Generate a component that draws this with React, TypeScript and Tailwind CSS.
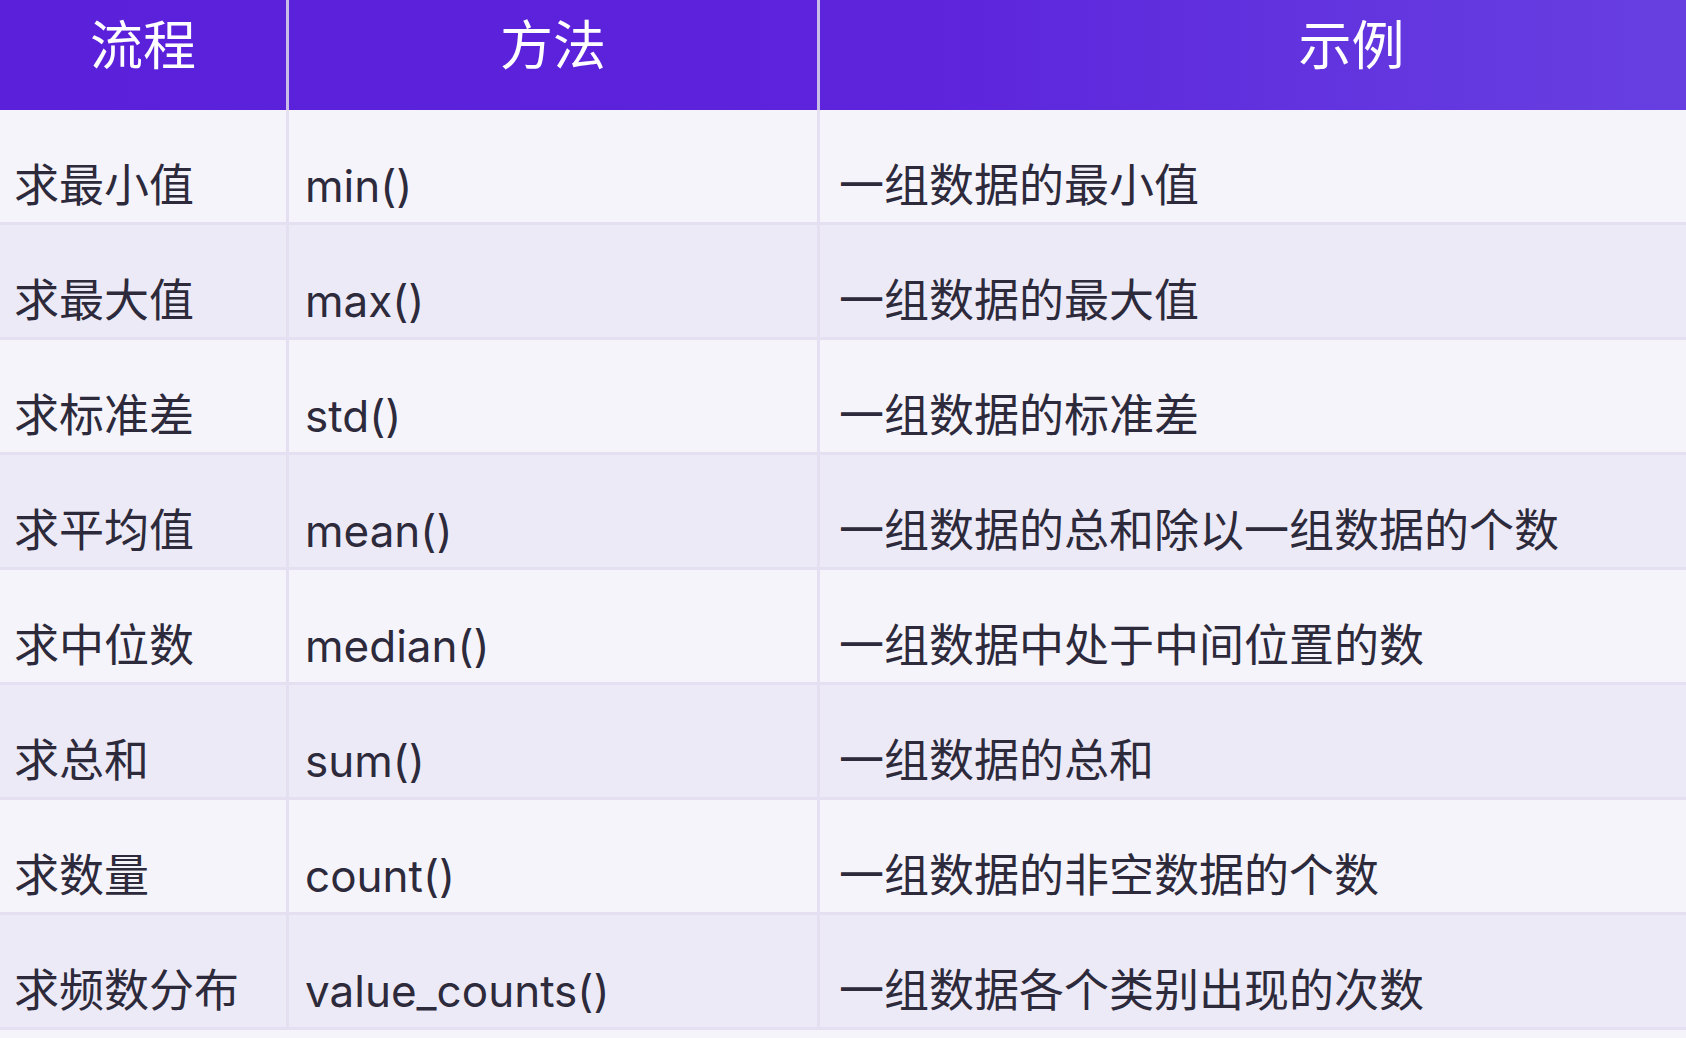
const rows = [
  { step: "求最小值", method: "min()", example: "一组数据的最小值" },
  { step: "求最大值", method: "max()", example: "一组数据的最大值" },
  { step: "求标准差", method: "std()", example: "一组数据的标准差" },
  { step: "求平均值", method: "mean()", example: "一组数据的总和除以一组数据的个数" },
  { step: "求中位数", method: "median()", example: "一组数据中处于中间位置的数" },
  { step: "求总和", method: "sum()", example: "一组数据的总和" },
  { step: "求数量", method: "count()", example: "一组数据的非空数据的个数" },
  { step: "求频数分布", method: "value_counts()", example: "一组数据各个类别出现的次数" },
];

const font = "font-['Inter','Noto_Sans_CJK_SC',sans-serif]";

export default function App() {
  return (
    <div className={`h-[1038px] w-[1686px] overflow-hidden bg-[#f6f4fb] ${font}`}>
      <div className="w-[1883px]">
        <div className="grid h-[110px] grid-cols-[286px_531px_1066px] bg-gradient-to-r from-[#5a20da] via-[#5d24dc] to-[#6a45e2] text-[53px] leading-none text-white">
          <div className="flex justify-center pt-[20px]">流程</div>
          <div className="flex justify-center border-l-[3px] border-[#c7bde6] pt-[20px]">方法</div>
          <div className="flex justify-center border-l-[3px] border-[#c7bde6] pt-[20px]">示例</div>
        </div>
        {rows.map((row, i) => (
          <div
            key={row.step}
            className={`grid h-[115px] grid-cols-[286px_531px_1066px] border-b-[3px] border-[#e4e0f1] text-[45px] leading-none text-[#2d2a3b] ${
              i % 2 === 0 ? "bg-[#f6f4fb]" : "bg-[#edeaf7]"
            }`}
          >
            <div className="flex items-end pb-[14px] pl-[14px]">{row.step}</div>
            <div className="flex items-end border-l-[3px] border-[#e4e0f1] pb-[14px] pl-[16px] text-[44px]">{row.method}</div>
            <div className="flex items-end border-l-[3px] border-[#e4e0f1] pb-[14px] pl-[19px]">{row.example}</div>
          </div>
        ))}
      </div>
    </div>
  );
}
